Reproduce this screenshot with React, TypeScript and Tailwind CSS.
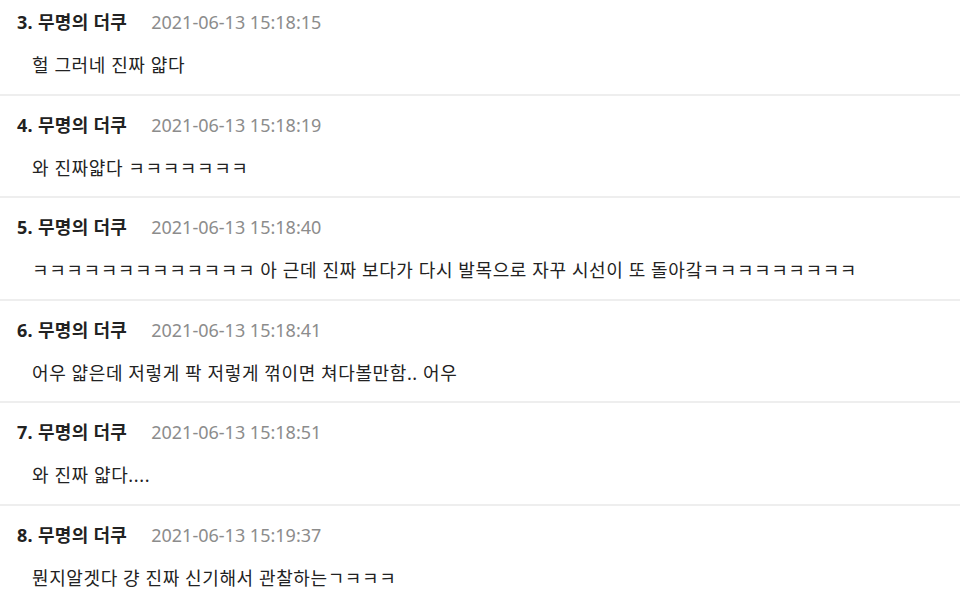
const comments = [
  { no: 3, name: "무명의 더쿠", date: "2021-06-13 15:18:15", body: "헐 그러네 진짜 얇다" },
  { no: 4, name: "무명의 더쿠", date: "2021-06-13 15:18:19", body: "와 진짜얇다 ㅋㅋㅋㅋㅋㅋㅋ" },
  {
    no: 5,
    name: "무명의 더쿠",
    date: "2021-06-13 15:18:40",
    body: "ㅋㅋㅋㅋㅋㅋㅋㅋㅋㅋㅋㅋㅋ 아 근데 진짜 보다가 다시 발목으로 자꾸 시선이 또 돌아갘ㅋㅋㅋㅋㅋㅋㅋㅋㅋ",
  },
  { no: 6, name: "무명의 더쿠", date: "2021-06-13 15:18:41", body: "어우 얇은데 저렇게 팍 저렇게 꺾이면 쳐다볼만함.. 어우" },
  { no: 7, name: "무명의 더쿠", date: "2021-06-13 15:18:51", body: "와 진짜 얇다...." },
  { no: 8, name: "무명의 더쿠", date: "2021-06-13 15:19:37", body: "뭔지알겟다 걍 진짜 신기해서 관찰하는ㄱㅋㅋㅋ" },
];

export default function App() {
  return (
    <div className="h-[595px] w-[960px] overflow-hidden bg-white font-['Noto_Sans','Noto_Sans_CJK_KR',sans-serif] text-[#333]">
      <ul className="-mt-[7px]">
        {comments.map((c) => (
          <li key={c.no} className="border-b-2 border-[#eeeeee] pl-[17px] pt-[17px] pb-[16.5px]">
            <div className="flex items-center gap-[24px] leading-6">
              <span className="text-[18px] font-bold tracking-[0.3px] text-[#222]">
                {c.no}. {c.name}
              </span>
              <span className="text-[18px] text-[#8c8c8c]">{c.date}</span>
            </div>
            <p className="mt-[19px] pl-[15px] text-[18px] leading-6 tracking-[0.6px] text-[#222]">{c.body}</p>
          </li>
        ))}
      </ul>
    </div>
  );
}
